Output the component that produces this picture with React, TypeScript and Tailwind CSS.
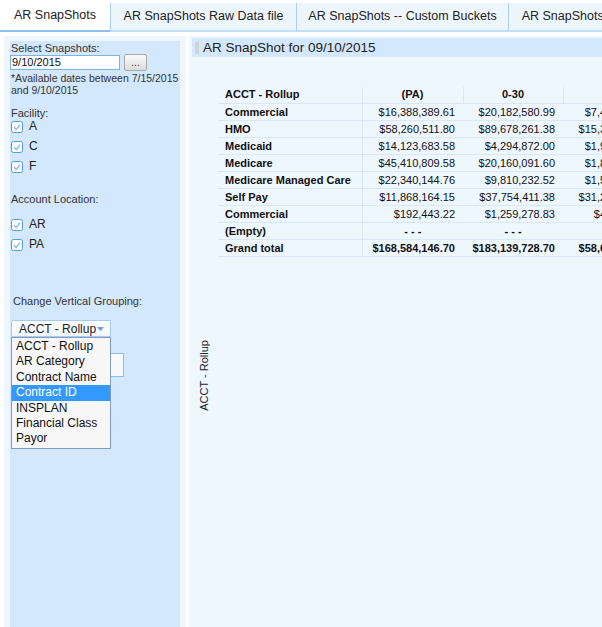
import React from 'react';

const tabs = [
  { label: 'AR SnapShots', w: 'w-[110px]', active: true },
  { label: 'AR SnapShots Raw Data file', w: 'w-[186px]', active: false },
  { label: 'AR SnapShots -- Custom Buckets', w: 'w-[212px]', active: false },
  { label: 'AR SnapShots Aging Summary', w: 'w-[200px]', active: false },
];

const rows = [
  ['Commercial', '$16,388,389.61', '$20,182,580.99', '$7,412,508.35'],
  ['HMO', '$58,260,511.80', '$89,678,261.38', '$15,306,744.19'],
  ['Medicaid', '$14,123,683.58', '$4,294,872.00', '$1,962,403.71'],
  ['Medicare', '$45,410,809.58', '$20,160,091.60', '$1,845,220.06'],
  ['Medicare Managed Care', '$22,340,144.76', '$9,810,232.52', '$1,527,915.40'],
  ['Self Pay', '$11,868,164.15', '$37,754,411.38', '$31,204,862.93'],
  ['Commercial', '$192,443.22', '$1,259,278.83', '$418,306.27'],
  ['(Empty)', '- - -', '- - -', '- - -'],
];

const groupings = ['ACCT - Rollup', 'AR Category', 'Contract Name', 'Contract ID', 'INSPLAN', 'Financial Class', 'Payor'];

const Check = () => (
  <svg width="12" height="12" viewBox="0 0 12 12" className="shrink-0">
    <rect x="0.5" y="0.5" width="11" height="11" rx="2" fill="#fff" stroke="#4f9be6" />
    <path d="M3 6.3 L5.1 8.4 L9 3.7" fill="none" stroke="#86bcee" strokeWidth="1.4" />
  </svg>
);

const CheckRow: React.FC<{ label: string; first?: boolean }> = ({ label, first }) => (
  <div className={`flex items-center h-[13px] gap-[6px] pl-[1px] ${first ? '' : 'mt-[7px]'}`}>
    <Check />
    <span className="text-[12px] leading-[13px] text-[#222]">{label}</span>
  </div>
);

const App: React.FC = () => {
  return (
    <div className="w-[602px] h-[627px] overflow-hidden bg-white flex flex-col font-['Liberation_Sans',Arial,sans-serif] text-[#222]">
      {/* tab strip */}
      <div className="flex items-end h-[32px] shrink-0 overflow-hidden">
        {tabs.map((t) =>
          t.active ? (
            <div key={t.label} className={`${t.w} shrink-0 h-[32px] bg-white border-b-2 border-[#8cc0ee] flex items-center justify-center text-[12.5px]`}>
              {t.label}
            </div>
          ) : (
            <div key={t.label} className={`${t.w} shrink-0 h-[29px] bg-[#eef6fd] border-l border-[#a9cff2] border-b-2 border-b-[#c4dff7] flex items-center justify-center text-[12.5px] whitespace-nowrap`}>
              {t.label}
            </div>
          )
        )}
      </div>

      <div className="flex flex-1 pt-[4px] min-h-0">
        {/* left panel */}
        <div className="ml-[4px] w-[182px] shrink-0 bg-[#eef6fe] pt-[5px] px-[6px] flex">
          <div className="w-[170px] bg-[#d4e8fd] flex flex-col">
            <div className="pl-[1px] pt-[1px] text-[11px] leading-[12px] text-[#333]">Select Snapshots:</div>
            <div className="flex items-center h-[17px]">
              <div className="w-[110px] h-[15px] bg-white border border-[#7fb2e6] text-[11px] leading-[13px] pl-[1px] text-[#111]">9/10/2015</div>
              <div className="ml-[4px] w-[23px] h-[17px] rounded-[2px] border border-[#a8a8a8] bg-gradient-to-b from-[#fafafa] to-[#dcdcdc] flex items-center justify-center text-[10px] leading-[10px] text-[#333]">...</div>
            </div>
            <div className="mt-[1px] pl-[1px] text-[10.5px] leading-[12px] text-[#333]">
              *Available dates between 7/15/2015
              <br />
              and 9/10/2015
            </div>

            <div className="mt-[11px] pl-[1px] text-[11px] leading-[13px] text-[#333]">Facility:</div>
            <CheckRow label="A" first />
            <CheckRow label="C" />
            <CheckRow label="F" />

            <div className="mt-[20px] pl-[1px] text-[11px] leading-[13px] text-[#333]">Account Location:</div>
            <div className="mt-[12px]">
              <CheckRow label="AR" first />
              <CheckRow label="PA" />
            </div>

            <div className="mt-[44px] pl-[3px] text-[11px] leading-[13px] text-[#333]">Change Vertical Grouping:</div>

            <div className="relative mt-[12px] ml-[1px] w-[100px]">
              <div className="h-[17px] w-[100px] rounded-t-[2px] border border-[#a9cbf0] bg-gradient-to-b from-white to-[#f1f6fc] flex items-center justify-between pl-[7px] pr-[6px]">
                <span className="text-[12px] leading-[14px] text-[#222]">ACCT - Rollup</span>
                <svg width="7" height="4" viewBox="0 0 7 4">
                  <path d="M0 0 H7 L3.5 4 Z" fill="#6f9fd6" />
                </svg>
              </div>
              <div className="absolute left-0 top-[17px] z-10 w-[100px] border border-[#7f9cc4] bg-[#f7f7f7] py-[1px]">
                {groupings.map((g) => (
                  <div
                    key={g}
                    className={`h-[15.4px] pl-[4px] text-[12px] leading-[15.4px] ${
                      g === 'Contract ID' ? 'bg-[#3399ff] text-white' : 'text-[#111]'
                    }`}
                  >
                    {g}
                  </div>
                ))}
              </div>
            </div>
            <div className="mt-[16px] ml-[1px] w-[113px] h-[24px] border border-[#8fbfee] bg-[#f6faff]" />
          </div>
        </div>

        {/* right panel */}
        <div className="ml-[3px] flex-1 bg-[#eef6fe] flex flex-col overflow-hidden pt-[2px]">
          <div className="ml-[3px] h-[19px] bg-[#d4e8fd] flex items-center shrink-0">
            <div className="ml-[3px] w-[4px] h-[12px] bg-[#d2d2d2]" />
            <span className="ml-[4px] text-[13.5px] leading-[16px] text-[#222] whitespace-nowrap">AR SnapShot for 09/10/2015</span>
          </div>

          <div className="flex items-start">
            <div className="w-[29px] shrink-0 pt-[283px] flex justify-center">
              <span className="[writing-mode:vertical-rl] rotate-180 text-[11px] leading-[12px] text-[#222] whitespace-nowrap">ACCT - Rollup</span>
            </div>
            <table className="mt-[30px] border-collapse text-[11px] text-[#111] shrink-0">
              <thead>
                <tr className="h-[16px] border-b border-[#d9e8f8]">
                  <th className="w-[144px] min-w-[144px] text-left pl-[7px] font-bold border-r border-[#d9e8f8] p-0 leading-[15px]">ACCT - Rollup</th>
                  <th className="w-[101px] min-w-[101px] text-center font-bold border-r border-[#d9e8f8] p-0 leading-[15px]">(PA)</th>
                  <th className="w-[100px] min-w-[100px] text-center font-bold border-r border-[#d9e8f8] p-0 leading-[15px]">0-30</th>
                  <th className="w-[100px] min-w-[100px] text-center pl-[20px] font-bold border-r border-[#d9e8f8] p-0 leading-[15px]">31-60</th>
                </tr>
              </thead>
              <tbody>
                {rows.map((r, i) => (
                  <tr key={i} className="h-[17px] border-b border-[#d9e8f8]">
                    <td className="pl-[7px] font-bold border-r border-[#d9e8f8] p-0 leading-[16px] whitespace-nowrap">{r[0]}</td>
                    {r.slice(1).map((v, j) =>
                      v === '- - -' ? (
                        <td key={j} className="text-center font-bold p-0 leading-[16px]">{v}</td>
                      ) : (
                        <td key={j} className="text-right pr-[8px] p-0 leading-[16px] whitespace-nowrap">{v}</td>
                      )
                    )}
                  </tr>
                ))}
                <tr className="h-[17px] border-b border-[#d9e8f8] font-bold">
                  <td className="pl-[7px] border-r border-[#d9e8f8] p-0 leading-[16px]">Grand total</td>
                  <td className="text-right pr-[8px] p-0 leading-[16px]">$168,584,146.70</td>
                  <td className="text-right pr-[8px] p-0 leading-[16px]">$183,139,728.70</td>
                  <td className="text-right pr-[8px] p-0 leading-[16px]">$58,677,165.91</td>
                </tr>
              </tbody>
            </table>
          </div>
        </div>
      </div>
    </div>
  );
};

export default App;
